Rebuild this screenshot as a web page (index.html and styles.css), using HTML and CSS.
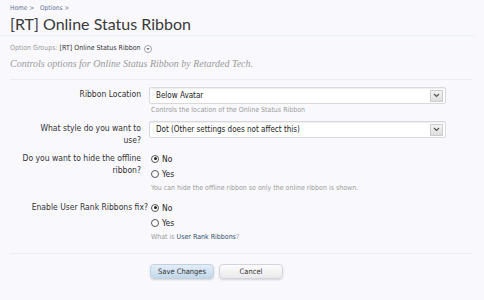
FILE: index.html
```html
<!DOCTYPE html>
<html>
<head>
<meta charset="utf-8">
<link rel="stylesheet" href="styles.css">
</head>
<body>
<div class="page">
  <div class="crumbs"><a>Home</a> &gt; <span class="gap"></span><a>Options</a> &gt;</div>
  <h1 class="title">[RT] Online Status Ribbon</h1>
  <div class="rule"></div>
  <div class="groups"><span class="glabel">Option Groups:</span> <span class="gval">[RT] Online Status Ribbon</span>
    <svg class="gicon" width="8" height="8" viewBox="0 0 8 8"><circle cx="4" cy="4" r="3.5" fill="#fff" stroke="#8a8a9a" stroke-width="0.8"/><path d="M2.3 3.2 L4 4.9 L5.7 3.2 Z" fill="#555"/></svg>
  </div>
  <p class="desc">Controls options for Online Status Ribbon by Retarded Tech.</p>

  <form class="form">
    <div class="row">
      <label class="lbl">Ribbon Location</label>
      <div class="ctl">
        <div class="select"><span>Below Avatar</span><span class="arrow"><svg width="7" height="5" viewBox="0 0 7 5"><path d="M1 1 L3.5 3.5 L6 1" fill="none" stroke="#555" stroke-width="1.2"/></svg></span></div>
        <div class="hint">Controls the location of the Online Status Ribbon</div>
      </div>
    </div>
    <div class="row r2">
      <label class="lbl">What style do you want to use?</label>
      <div class="ctl">
        <div class="select"><span>Dot (Other settings does not affect this)</span><span class="arrow"><svg width="7" height="5" viewBox="0 0 7 5"><path d="M1 1 L3.5 3.5 L6 1" fill="none" stroke="#555" stroke-width="1.2"/></svg></span></div>
      </div>
    </div>
    <div class="row r3">
      <label class="lbl">Do you want to hide the offline ribbon?</label>
      <div class="ctl">
        <div class="radio"><span class="dot on"></span>No</div>
        <div class="radio"><span class="dot"></span>Yes</div>
        <div class="hint h3">You can hide the offline ribbon so only the online ribbon is shown.</div>
      </div>
    </div>
    <div class="row r4">
      <label class="lbl wide">Enable User Rank Ribbons fix?</label>
      <div class="ctl">
        <div class="radio"><span class="dot on"></span>No</div>
        <div class="radio"><span class="dot"></span>Yes</div>
        <div class="hint h3">What is <a class="link">User Rank Ribbons</a>?</div>
      </div>
    </div>
    <div class="buttons">
      <button type="button" class="btn primary">Save Changes</button>
      <button type="button" class="btn">Cancel</button>
    </div>
  </form>
</div>
</body>
</html>
```
FILE: styles.css
```css
html, body {
  margin: 0;
  padding: 0;
  background: #f9f9fd;
}
body {
  font-family: "DejaVu Sans Condensed", "DejaVu Sans", sans-serif;
  color: #333;
  width: 484px;
  height: 300px;
  overflow: hidden;
}
.page {
  padding: 4px 0 0 0;
}
.crumbs {
  padding-left: 10px;
  font-size: 6.5px;
  line-height: 8px;
  color: #5a7190;
}
.crumbs .gap { display: inline-block; width: 4px; }
.title {
  margin: 1px 0 0 10px;
  font-family: "Lato", sans-serif;
  font-weight: normal;
  font-size: 16px;
  line-height: 22px;
  color: #3a3a3a;
}
.rule {
  margin-top: 0;
  width: 475px;
  height: 1px;
  background: #e2f3f6;
}
.groups {
  margin: 8px 0 0 10px;
  font-size: 7px;
  line-height: 9px;
  display: flex;
  align-items: center;
  gap: 2px;
}
.glabel { color: #999; }
.gval { color: #333; }
.gicon { margin-left: 1px; }
.desc {
  margin: 5px 0 0 10px;
  font-family: "Liberation Serif", serif;
  font-style: italic;
  font-size: 10px;
  line-height: 12px;
  color: #999;
}
.form {
  margin: 9px 12px 0 10px;
  border-top: 1px solid #eeeef2;
  padding-top: 7px;
}
.row {
  display: grid;
  grid-template-columns: 120px 297px;
  column-gap: 8px;
  padding-left: 11px;
}
.lbl {
  text-align: right;
  font-size: 8.5px;
  line-height: 11.5px;
  padding-top: 2px;
  color: #333;
}
.lbl.wide { white-space: nowrap; margin-right: -7px; }
.select {
  height: 15px;
  background: #fff;
  border: 1px solid #d8d8de;
  border-radius: 2px;
  box-shadow: inset 0 1px 1px #eee;
  display: flex;
  align-items: center;
  justify-content: space-between;
  padding-left: 6px;
  font-size: 8px;
  color: #222;
}
.arrow {
  width: 11px;
  height: 10px;
  margin-right: 2px;
  border: 1px solid #ccc;
  background: linear-gradient(#f4f4f4, #dedede);
  display: flex;
  align-items: center;
  justify-content: center;
}
.hint {
  font-size: 7px;
  line-height: 10px;
  color: #999;
  padding: 1px 0 0 2px;
}
.r2 { margin-top: 6px; }
.r3 { margin-top: 5px; }
.r4 { margin-top: 7px; }
.radio {
  display: flex;
  align-items: center;
  font-size: 8.5px;
  height: 15px;
  padding-left: 2px;
  color: #222;
}
.dot {
  width: 8px;
  height: 8px;
  border: 1px solid #555;
  border-radius: 50%;
  background: #fff;
  margin-right: 3px;
  position: relative;
  box-sizing: border-box;
}
.dot.on::after {
  content: "";
  position: absolute;
  left: 1.5px;
  top: 1.5px;
  width: 3px;
  height: 3px;
  border-radius: 50%;
  background: #222;
}
.h3 { padding-top: 2px; }
.link { color: #2f4e6b; }
.buttons {
  margin-top: 11px;
  border-top: 1px solid #eeeef2;
  padding: 10px 0 0 140px;
  display: flex;
  gap: 5px;
}
.btn {
  width: 64px;
  height: 15px;
  border: 1px solid #d2d6dc;
  border-radius: 4px;
  font-family: "DejaVu Sans Condensed", "DejaVu Sans", sans-serif;
  font-size: 7.5px;
  color: #333;
  background: linear-gradient(#fdfdfd, #e9e9ec);
  box-shadow: 0 1px 2px rgba(0,0,0,0.15);
  padding: 0;
}
.btn.primary {
  background: linear-gradient(#e3eef8, #c2d7ea);
  border-color: #c3d0dd;
}
```
